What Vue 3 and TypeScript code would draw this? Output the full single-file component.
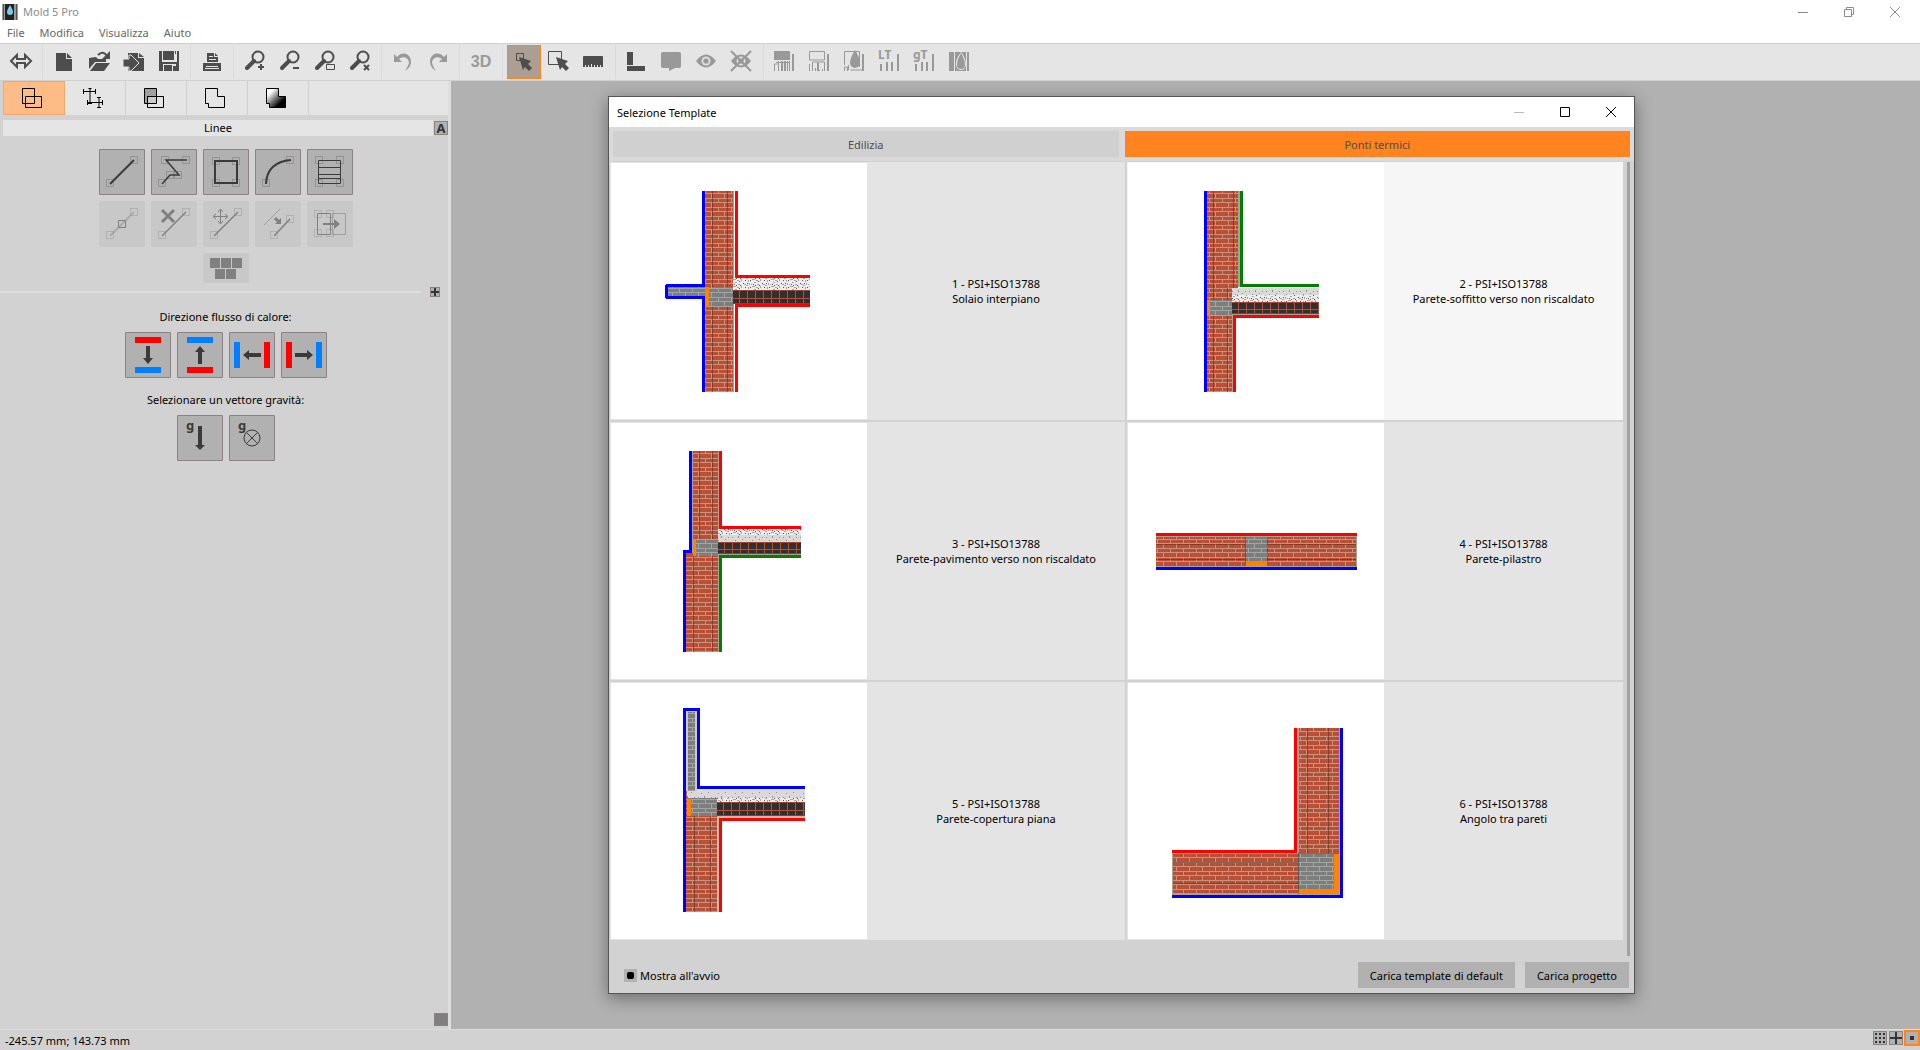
<script setup lang="ts">
import { ref } from 'vue'

interface Tool {
  name: string
  art: string
  off?: boolean
  active?: boolean
}

interface Template {
  id: number
  norm: string
  title: string
  art: string
}

const menus = ['File', 'Modifica', 'Visualizza', 'Aiuto']
const startup = ref(true)
const selectedTab = ref(1)
const dialogTabs = ['Edilizia', 'Ponti termici']

const lens =
  '<circle cx="20" cy="12" r="5.5" fill="none" stroke="currentColor" stroke-width="2"/><path d="M16 16l-7 7" fill="none" stroke="currentColor" stroke-width="4" stroke-linecap="round"/>'
const eye =
  '<path d="M6 16q10-13 20 0q-10 13-20 0z"/><circle cx="16" cy="16" r="4.5" fill="#ddd"/><circle cx="16" cy="16" r="2.6"/>'
const cursor = '<path d="M0 0l12 4-3 3 4 4-3 3-4-4-2 3z"'

const toolGroups: Tool[][] = [
  [{ name: 'Adatta', art: '<path d="M7 16l6-6v4h8v-4l6 6-6 6v-4h-8v4z" fill="none" stroke="currentColor" stroke-width="2"/>' }],
  [
    { name: 'Nuovo', art: '<path d="M9 8h10v6h6v12H9zM20 8l5 5h-5z"/>' },
    { name: 'Apri', art: '<path d="M7 24V13l7-1 2 2h8v3H13zM8 26l6-8h14l-6 8z"/><path d="M16 10q5-5 9 1" fill="none" stroke="currentColor" stroke-width="2"/><path d="M28 6v8h-8z"/>' },
    { name: 'Importa', art: '<path d="M11 8h10v5h6v13H11zM22 8l5 4h-5z"/><path d="M6 14h6v-4h2l8 8-8 8h-2v-4H6z" stroke="#e5e5e5" stroke-width="1"/>' },
    { name: 'Salva', art: '<path d="M7 6h3v11h15V6h2v20H7z"/><path d="M11 6h11v9H11zM23 6h1v3h-1z"/><path d="M11 19h13v7H11z" fill="#e5e5e5"/><path d="M12 20h8v6h-8zM21 21h3v5h-3z"/>' },
  ],
  [{ name: 'Stampa', art: '<path d="M12 8h7v4h4v5H12zM20 8l3 3h-3zM8 18h18v8H8z"/><path d="M14 11h4v1h-4zM14 14h7v1h-7zM11 21h12v1H11zM10 23h14v1H10z" fill="#e5e5e5"/>' }],
  [
    { name: 'Ingrandisci', art: lens + '<path d="M22 19h2v2h2v2h-2v2h-2v-2h-2v-2h2z"/>' },
    { name: 'Riduci', art: lens + '<path d="M20 22h6v2h-6z"/>' },
    { name: 'Zoom area', art: lens + '<path d="M18.500 19.500h8v5h-8z" fill="#e5e5e5" stroke="currentColor"/>' },
    { name: 'Zoom tutto', art: lens + '<path d="M21 20l5 5m0-5l-5 5" stroke="currentColor" stroke-width="2"/>' },
  ],
  [
    { name: 'Annulla', off: true, art: '<path d="M8 9v8h8l-3-3c5-4 10-1 10 4-1 3-2 5-4 8 5-3 6-7 6-10-1-8-9-10-14-4z"/>' },
    { name: 'Ripeti', off: true, art: '<path d="M26 9v8h-8l3-3c-5-4-10-1-10 4 1 3 2 5 4 8-5-3-6-7-6-10 1-8 9-10 14-4z"/>' },
  ],
  [{ name: 'Vista 3D', off: true, art: '<text x="17" y="22" text-anchor="middle" font-family="Liberation Sans, sans-serif" font-weight="700" font-size="16">3D</text>' }],
  [
    { name: 'Seleziona', active: true, art: '<path d="M9.500 8.500h7v7h-7z" fill="none" stroke="currentColor"/>' + cursor + ' transform="translate(12 12)"/>' },
    { name: 'Seleziona area', art: '<path d="M6.500 6.500h13v13h-13z" fill="none" stroke="currentColor"/>' + cursor + ' transform="translate(14 12)"/>' },
    { name: 'Misura', art: '<path d="M6 12q0-1 1-1h18q1 0 1 1v10H6z"/><path d="M8.500 22v-2m3 2v-2m3 2v-3m3 3v-2m3 2v-2m3 2v-2" stroke="#e5e5e5"/>' },
  ],
  [
    { name: 'Angolo', art: '<path d="M7 7h6v13H7zM7 21h18v5H7z"/>' },
    { name: 'Commento', off: true, art: '<path d="M8 7h16q2 0 2 2v12q0 2-2 2h-4l-6 3v-3H8q-2 0-2-2V9q0-2 2-2z"/>' },
    { name: 'Mostra', off: true, art: eye },
    { name: 'Nascondi', off: true, art: eye + '<path d="M6 6l20 20m0-20L6 26" stroke="currentColor" stroke-width="2"/>' },
  ],
  [
    { name: 'Risultati pieni', off: true, art: '<path d="M6 6h16v9H6zM24 9h2v17h-2zM10 16h1v10h-1zM13 16h2v10h-2zM16 16h2v10h-2zM19 16h1v10h-1zM21 16h1v10h-1zM8 17h14v1H8z"/><path d="M6.500 26v-7h3" fill="none" stroke="currentColor"/>' },
    { name: 'Risultati contorno', off: true, art: '<path d="M6.500 15V6.500h15V15h-15M6.500 26v-7m3 7v-9h12v9m-7-9v8m-2 1v-3m4 3v-1m3 1v-2" fill="none" stroke="currentColor"/><path d="M24 9h2v17h-2zM14 18h2v8h-2z"/>' },
    { name: 'Condensa', off: true, art: '<path d="M6.500 20V6.500h15V22m-15 4v-4h3v4m3-1h12m-14-5v5" fill="none" stroke="currentColor"/><path d="M24 9h2v17h-2zM17 5q5 8 5 13a5 5 0 0 1-10 0q0-5 5-13z"/>' },
    { name: 'LT', off: true, art: '<text x="5" y="14" font-family="Noto Sans, sans-serif" font-weight="700" font-size="12">LT</text><path d="M7 19h2v7H7zM13 17h2v9h-2zM18 17h2v9h-2zM24 9h2v17h-2z"/>' },
    { name: 'gT', off: true, art: '<text x="5" y="14" font-family="Noto Sans, sans-serif" font-weight="700" font-size="12">gT</text><path d="M7 19h2v7H7zM13 17h2v9h-2zM18 17h2v9h-2zM24 9h2v17h-2z"/>' },
    { name: 'Umidità', off: true, art: '<path d="M6 7h5v19H6zM24 7h2v19h-2zM12 7h11v19H12z"/><path d="M18 7q-6 8-5 13q1 5 5 5q4 0 5-5q0-7-5-13z" fill="#e5e5e5"/><path d="M18 8q4 7 4 12a4 4 0 0 1-8 0q0-5 4-12z"/>' },
  ],
]

const modes: Tool[] = [
  { name: 'Disegno', active: true, art: '<path d="M.500.500h12v15H.500zM3.500 8.500h16v11h-16z"/>' },
  { name: 'Quote', art: '<path d="M0 3.500h13M.500 1v5m12-5v5M5.500.500h3M7 0v16m-2-.500h4M4 14.500h16M4.500 12v5m15-5v5M16 9v11m-2-.500h4m-4-10h4"/>' },
  { name: 'Materiali', art: '<path d="M.500.500h12v15H.500z" fill="#a0a0a0"/><path d="M3.500 8.500h16v11h-16z" fill="#e5e5e5"/><path d="M3.500 8.500h9v7h-9z" fill="#ccc"/>' },
  { name: 'Contorni', art: '<path d="M.500.500h12v8h7v11h-16v-4h-3z"/>' },
  { name: 'Risultati', art: '<defs><linearGradient id="shade" x1="0" y1="0" x2="1" y2="1"><stop offset=".2" stop-color="#fff"/><stop offset=".75" stop-color="#000"/></linearGradient></defs><path d="M.500.500h12v8h7v11h-16v-4h-3z" fill="url(#shade)"/>' },
]

const box = (x: number, y: number) =>
  `<rect x="${x + 0.5}" y="${y + 0.5}" width="7" height="7" fill="none" stroke="#888" stroke-width="1"/>`

const lineTools: Tool[][] = [
  [
    { name: 'Linea', art: box(7, 30) + box(31, 7) + '<path d="M11 35l24-24" stroke-width="2"/>' },
    { name: 'Polilinea', art: box(7, 30) + box(15, 22) + box(23, 22) + box(10, 7) + box(31, 7) + '<path d="M11 35l8-9h9L15 11h21" stroke-width="1.500"/>' },
    { name: 'Rettangolo', art: box(9, 8) + box(29, 8) + box(9, 30) + box(29, 30) + '<path d="M12 12h22v22H12z" stroke-width="2"/>' },
    { name: 'Arco', art: box(7, 30) + box(31, 7) + '<path d="M11 35Q12 13 36 11" stroke-width="2"/>' },
    { name: 'Stratigrafia', art: box(8, 7) + box(29, 7) + box(8, 30) + box(29, 30) + '<path d="M11.500 11.500h22v23h-22zM11 18.500h23M11 25.500h23M11 29.500h23"/>' },
  ],
  [
    { name: 'Aggiungi punto', off: true, art: box(7, 30) + box(31, 7) + '<path d="M11 35l24-24" stroke-width="2" opacity=".4"/><path d="M19.500 19.500h7v7h-7z"/>' },
    { name: 'Elimina', off: true, art: box(7, 30) + box(31, 7) + '<path d="M11 35l24-24" stroke-width="1.500"/><path d="M11 9l12 12m0-12L11 21" stroke-width="3"/>' },
    { name: 'Sposta', off: true, art: box(7, 30) + box(31, 7) + '<path d="M11 35l24-24" stroke-width="1.500"/><path d="M17.500 9v13M11 15.500h13M15 11l2.500-3 2.500 3M15 20l2.500 3 2.500-3M13 13l-3 2.500 3 2.500M22 13l3 2.500-3 2.500"/>' },
    { name: 'Parallela', off: true, art: box(15, 30) + box(31, 14) + '<path d="M9 24L25 8" opacity=".6"/><path d="M19 35l16-17" stroke-width="1.500"/><path d="M20 17l4 4" stroke-width="3"/><path d="M20 23h6v-6z" fill="currentColor" stroke="none"/>' },
    { name: 'Sposta lato', off: true, art: box(7, 9) + box(19, 9) + box(7, 28) + box(19, 28) + '<path d="M10.500 12.500h13v21h-13z"/><path d="M25.500 12.500h13v21h-13z" opacity=".6"/><path d="M16 23h12" stroke-width="2"/><path d="M27 18l6 5-6 5z" fill="currentColor" stroke="none"/>' },
  ],
]

const red = '#f00'
const azure = '#0080ff'
const flowTools: Tool[] = [
  { name: 'Flusso verso il basso', art: `<path d="M10 5h26v6H10z" fill="${red}"/><path d="M10 35h26v6H10z" fill="${azure}"/><path d="M21 14h4v12h3l-5 6-5-6h3z"/>` },
  { name: "Flusso verso l'alto", art: `<path d="M10 5h26v6H10z" fill="${azure}"/><path d="M10 35h26v6H10z" fill="${red}"/><path d="M21 32h4V20h3l-5-6-5 6h3z"/>` },
  { name: 'Flusso verso sinistra', art: `<path d="M5 10h6v26H5z" fill="${azure}"/><path d="M35 10h6v26h-6z" fill="${red}"/><path d="M32 21v4H20v3l-6-5 6-5v3z"/>` },
  { name: 'Flusso verso destra', art: `<path d="M5 10h6v26H5z" fill="${red}"/><path d="M35 10h6v26h-6z" fill="${azure}"/><path d="M14 21v4h12v3l6-5-6-5v3z"/>` },
]
const gText = '<text x="9" y="15" font-family="Noto Sans, sans-serif" font-weight="700" font-size="13">g</text>'
const gravityTools: Tool[] = [
  { name: 'Gravità verticale', art: gText + '<path d="M21 11h4v19h3l-5 5-5-5h3z"/>' },
  { name: 'Gravità perpendicolare', art: gText + '<circle cx="23" cy="23" r="8" fill="none" stroke="currentColor"/><path d="M17.500 17.500l11 11m0-11l-11 11" stroke="currentColor"/>' },
]

const r = (x1: number, y1: number, x2: number, y2: number, fill: string, opacity = 1) =>
  `<rect x="${x1}" y="${y1}" width="${x2 - x1}" height="${y2 - y1}" fill="${fill}" opacity="${opacity}"/>`
const seamV = (x: number, y1: number, y2: number) => r(x, y1, x + 1, y2, '#3a1a10', 0.4)
const seamH = (y: number, x1: number, x2: number) => r(x1, y, x2, y + 1, '#3a1a10', 0.4)
const edge = (d: string, color: string) => `<path d="${d}" fill="none" stroke="${color}" stroke-width="3"/>`
const cells = (x1: number, y1: number, x2: number, y2: number) => {
  let out = r(x1, y1, x2, y2, '#303030')
  for (let x = x1 + 6; x < x2; x += 8) out += r(x, y1, x + 1, y2, '#c04a32')
  const mid = Math.round((y1 + y2) / 2) + 1
  return out + r(x1, mid, x2, mid + 1, '#c04a32') + r(x1, y1, x2, y1 + 1, '#a04434') + r(x1, y2 - 1, x2, y2, '#7a4438')
}
const brick = 'url(#brick)'
const block = 'url(#block)'
const screed = 'url(#screed)'
const light = 'url(#light)'
const orange = '#ff8200'
const plaster = '#a9a294'

const templates: Template[] = [
  {
    id: 1, norm: 'PSI+ISO13788', title: 'Solaio interpiano',
    art: r(94, 28, 122, 229, brick) + seamV(101, 28, 229) + seamV(116, 28, 229) + r(122, 28, 123, 229, plaster) +
      r(57, 124, 94, 133, block) + r(94, 124, 122, 144, block) + r(94, 124, 98, 144, orange) +
      r(122, 115, 199, 127, screed) + cells(122, 127, 199, 141) +
      edge('M92.500 28V122.500H57q-1.500 0-1.500 1.500v9q0 1.500 1.500 1.500H92.500V229', '#00f') +
      edge('M125.500 28V113.500H199M199 142.500H125.500V229', red),
  },
  {
    id: 2, norm: 'PSI+ISO13788', title: 'Parete-soffitto verso non riscaldato',
    art: r(79, 28, 110, 125, brick) + r(79, 125, 104, 229, brick) + r(110, 28, 112, 124, plaster) + r(104, 152, 105, 229, plaster) +
      seamV(85, 28, 229) + seamV(105, 28, 125) + seamV(99, 125, 229) +
      r(79, 137, 104, 153, block) + r(79, 137, 82, 153, orange) +
      r(104, 125, 191, 132, light) + r(104, 132, 191, 139, screed) + cells(104, 139, 191, 151) + r(104, 151, 191, 152, plaster) +
      edge('M77.500 28V229', '#00f') + edge('M113.500 28V122.500H191', '#008000') + edge('M191 153.500H106.500V229', red),
  },
  {
    id: 3, norm: 'PSI+ISO13788', title: 'Parete-pavimento verso non riscaldato',
    art: r(81, 28, 82, 130, plaster) + r(82, 28, 107, 130, brick) + r(75, 130, 107, 229, brick) + r(107, 28, 108, 229, plaster) +
      seamV(88, 28, 116) + seamV(101, 28, 229) + seamV(82, 133, 229) +
      r(82, 116, 107, 133, block) + r(82, 116, 85, 133, orange) +
      r(107, 106, 190, 112, screed) + r(107, 112, 190, 119, light) + cells(107, 119, 190, 131) + r(107, 131, 190, 132, plaster) +
      edge('M79.500 28V128.500H73.500V229', '#00f') + edge('M109.500 28V104.500H190', red) + edge('M190 133.500H109.500V229', '#008000'),
  },
  {
    id: 4, norm: 'PSI+ISO13788', title: 'Parete-pilastro',
    art: r(28, 113, 229, 144, plaster) + r(28, 114, 228, 143, brick) + seamH(121, 28, 228) + seamH(136, 28, 228) +
      r(117, 114, 139, 138, block) + r(117, 138, 139, 143, orange) + seamV(117, 114, 143) + seamV(139, 114, 143) +
      edge('M28 111.500H229', red) + edge('M28 145.500H229', '#00f'),
  },
  {
    id: 5, norm: 'PSI+ISO13788', title: 'Parete-copertura piana',
    art: r(75, 28, 86, 108, '#d8c8b4') + r(77, 29, 84, 108, block) + r(75, 108, 106, 229, brick) + r(106, 133, 108, 229, '#c8bca8') +
      seamV(83, 133, 229) + seamV(99, 133, 229) +
      r(86, 106, 194, 108, '#ddd') + r(76, 108, 194, 115, light) + r(106, 115, 194, 119, screed) +
      r(76, 115, 106, 133, block) + r(76, 116, 80, 133, orange) + cells(106, 119, 194, 133) + r(106, 133, 194, 135, '#c8bca8') +
      edge('M73.500 229V26.500H87.500V104.500H194', '#00f') + edge('M194 136.500H109.500V229', red),
  },
  {
    id: 6, norm: 'PSI+ISO13788', title: 'Angolo tra pareti',
    art: r(169, 45, 212, 212, plaster) + r(44, 170, 212, 212, plaster) + r(171, 45, 211, 170, brick) + r(45, 171, 170, 211, brick) +
      seamV(179, 45, 170) + seamV(200, 45, 170) + seamH(179, 45, 170) + seamH(200, 45, 170) +
      r(170, 170, 211, 211, orange) + r(170, 170, 206, 206, block) + seamV(170, 170, 211) + seamH(170, 170, 211) +
      edge('M167.500 45V168.500H44', red) + edge('M213.500 45V213.500H44', '#00f'),
  },
]
</script>

<template>
  <div class="app">
    <svg class="defs" aria-hidden="true" width="0" height="0">
      <defs>
        <pattern id="brick" width="13" height="9" patternUnits="userSpaceOnUse">
          <path fill="#b95138" d="M0 0h13v9H0z" />
          <path fill="#ac4a33" d="M0 1h6v1H0zM7 6h5v1H7z" />
          <path fill="#cb917b" d="M0 3h13v1H0zM0 8h13v1H0zM3 0h1v3H3zM9 4h1v4H9z" />
        </pattern>
        <pattern id="block" width="13" height="9" patternUnits="userSpaceOnUse">
          <path fill="#7c7e7e" d="M0 0h13v9H0z" />
          <path fill="#a3a5a5" d="M0 3h13v1H0zM0 8h13v1H0zM3 0h1v3H3zM9 4h1v4H9z" />
        </pattern>
        <pattern id="screed" width="19" height="7" patternUnits="userSpaceOnUse">
          <path fill="#ececec" d="M0 0h19v7H0z" />
          <path fill="#a4a4a4" d="M0 2h2v1H0zM2 3h2v1H2zM5 1h1v2H5zM8 4h3v1H8zM13 2h2v1h-2zM16 4h1v2h-1zM10 0h2v1h-2zM4 5h1v2H4zM12 5h2v1h-2zM7 2h1v1H7z" />
          <path fill="#555" d="M3 1h1v1H3zM6 5h1v1H6zM11 3h1v1h-1zM15 3h1v1h-1zM18 1h1v1h-1zM9 2h1v1H9zM14 6h1v1h-1zM1 5h1v1H1z" />
        </pattern>
        <pattern id="light" width="17" height="7" patternUnits="userSpaceOnUse">
          <path fill="#d9d9d7" d="M0 0h17v7H0z" />
          <path fill="#8f8f8f" d="M2 2h1v1H2zM5 5h1v1H5zM8 1h1v2H8zM12 4h1v1h-1zM15 2h1v1h-1z" />
        </pattern>
      </defs>
    </svg>

    <header class="titlebar">
      <svg class="logo" width="16" height="16" viewBox="0 0 16 16">
        <path fill="#999" d="M0 0h16v16H0z" />
        <path fill="#555" d="M1 0h1v16H1zM14 0h1v16h-1z" />
        <path fill="#222" d="M3 0h9v16H3z" />
        <path fill="#7cc9f2" d="M8 1q3 5 3 7a3 3 0 0 1-6 0q0-2 3-7z" />
      </svg>
      <span class="app-name">Mold 5 Pro</span>
      <div class="window-buttons">
        <button aria-label="Riduci a icona"><svg width="10" height="10"><path d="M0 5.500h10" /></svg></button>
        <button aria-label="Ripristina"><svg width="10" height="10"><path d="M.500 2.500h7v7h-7zM2.500 2.500v-2h7v7h-2" /></svg></button>
        <button aria-label="Chiudi"><svg width="10" height="10"><path d="M0 0l10 10M10 0L0 10" /></svg></button>
      </div>
    </header>

    <nav class="menubar">
      <button v-for="m in menus" :key="m">{{ m }}</button>
    </nav>

    <div class="toolbar">
      <div v-for="(group, gi) in toolGroups" :key="gi" class="tool-group">
        <button v-for="t in group" :key="t.name" :class="{ off: t.off, active: t.active }" :aria-label="t.name">
          <svg width="34" height="34" viewBox="0 0 34 34" v-html="t.art" />
        </button>
      </div>
    </div>

    <div class="work">
      <aside class="panel">
        <div class="modes">
          <button v-for="m in modes" :key="m.name" :class="{ active: m.active }" :aria-label="m.name">
            <svg width="20" height="20" viewBox="0 0 20 20" v-html="m.art" />
          </button>
        </div>
        <div class="section-head">
          <h2>Linee</h2>
          <button class="mini auto">A</button>
        </div>
        <div class="line-tools">
          <div v-for="(row, ri) in lineTools" :key="ri" class="tiles">
            <button v-for="t in row" :key="t.name" class="tile stroked" :class="{ off: t.off }" :aria-label="t.name">
              <svg width="46" height="46" viewBox="0 0 46 46" v-html="t.art" />
            </button>
          </div>
          <div class="tiles">
            <button class="tile low off" aria-label="Blocchi">
              <svg width="46" height="30" viewBox="0 0 46 30">
                <path d="M7 5h10v10H7zM18 5h10v10H18zM29 5h10v10H29zM12 16h10v10H12zM23 16h10v10H23z" />
              </svg>
            </button>
          </div>
        </div>
        <div class="divider">
          <span class="rule"></span>
          <button class="mini plus" aria-label="Espandi">
            <svg width="8" height="8"><path d="M3 0h2v3h3v2H5v3H3V5H0V3h3z" /></svg>
          </button>
        </div>
        <p class="caption">Direzione flusso di calore:</p>
        <div class="tiles">
          <button v-for="t in flowTools" :key="t.name" class="tile" :aria-label="t.name">
            <svg width="46" height="46" viewBox="0 0 46 46" v-html="t.art" />
          </button>
        </div>
        <p class="caption second">Selezionare un vettore gravità:</p>
        <div class="tiles">
          <button v-for="t in gravityTools" :key="t.name" class="tile" :aria-label="t.name">
            <svg width="46" height="46" viewBox="0 0 46 46" v-html="t.art" />
          </button>
        </div>
        <div class="panel-foot"><button class="mini grip" aria-label="Pannello"></button></div>
      </aside>

      <main class="canvas"></main>
    </div>

    <footer class="status">
      <span>-245.57 mm; 143.73 mm</span>
      <div class="snaps">
        <button aria-label="Griglia">
          <svg width="12" height="12"><path d="M1 2h11M1 6h11M1 10h11" stroke-dasharray="2 2" stroke-width="2" /></svg>
        </button>
        <button aria-label="Assi"><svg width="12" height="12"><path d="M6 0v12M0 6h12" stroke-width="2" /></svg></button>
        <button class="active" aria-label="Punti"><svg width="12" height="12"><path d="M4 6h4" stroke-width="4" /></svg></button>
      </div>
    </footer>

    <section class="dialog" role="dialog" aria-labelledby="dialog-title">
      <header class="dialog-title">
        <h1 id="dialog-title">Selezione Template</h1>
        <div class="window-buttons">
          <button class="faint" aria-label="Riduci a icona"><svg width="10" height="10"><path d="M0 5.500h10" /></svg></button>
          <button aria-label="Ingrandisci"><svg width="10" height="10"><path d="M.500.500h9v9h-9z" /></svg></button>
          <button aria-label="Chiudi"><svg width="10" height="10"><path d="M0 0l10 10M10 0L0 10" /></svg></button>
        </div>
      </header>
      <div class="dialog-tabs" role="tablist">
        <button v-for="(t, i) in dialogTabs" :key="t" role="tab" :aria-selected="i === selectedTab" :class="{ active: i === selectedTab }" @click="selectedTab = i">
          {{ t }}
        </button>
      </div>
      <div class="list">
        <div class="grid">
          <button v-for="t in templates" :key="t.id" class="card" :class="{ hovered: t.id === 2 }">
            <svg class="preview" width="256" height="256" viewBox="0 0 256 256" shape-rendering="crispEdges" v-html="t.art" />
            <span class="label">{{ t.id }} - {{ t.norm }}<br />{{ t.title }}</span>
          </button>
        </div>
        <div class="scrollbar"></div>
      </div>
      <footer class="dialog-foot">
        <label><input v-model="startup" type="checkbox" />Mostra all'avvio</label>
        <div class="actions">
          <button>Carica template di default</button>
          <button>Carica progetto</button>
        </div>
      </footer>
    </section>
  </div>
</template>

<style>
body {
  margin: 0;
}
</style>

<style scoped>
.app {
  position: relative;
  display: flex;
  flex-direction: column;
  min-height: 100vh;
  background: #fff;
  color: #000;
  font: 11px/15px "Noto Sans", "Open Sans", sans-serif;
}
.defs {
  position: absolute;
}
button {
  display: block;
  margin: 0;
  padding: 0;
  border: 0;
  background: none;
  color: inherit;
  font: inherit;
}
svg {
  display: block;
  fill: currentColor;
}
h1,
h2,
p {
  margin: 0;
  font: inherit;
}

.titlebar {
  display: flex;
  align-items: center;
  height: 23px;
  padding-left: 2px;
}
.app-name {
  margin-left: 5px;
  color: #8c8c8c;
}
.window-buttons {
  display: flex;
  margin-left: auto;
}
.window-buttons button {
  display: grid;
  place-items: center;
  width: 46px;
  height: 20px;
}
.window-buttons svg {
  fill: none;
  stroke: currentColor;
}
.titlebar .window-buttons {
  color: #8c8c8c;
  padding-right: 2px;
}
.menubar {
  display: flex;
  gap: 15px;
  height: 18px;
  padding: 1px 7px 0;
  box-sizing: border-box;
  color: #666;
}
.toolbar {
  display: flex;
  height: 34px;
  padding: 1px 4px;
  margin-top: 2px;
  border-top: 1px solid #cfcfcf;
  border-bottom: 1px solid #d0d0d0;
  background: #e5e5e5;
  color: #4d4d4d;
}
.tool-group {
  display: flex;
  gap: 1px;
}
.tool-group + .tool-group {
  margin-left: 4px;
  padding-left: 4px;
  border-left: 1px solid #dadada;
}
.tool-group .off {
  color: #999;
}
.tool-group .active {
  background: #ab9e93;
  outline: 1px solid #ff831e;
  outline-offset: -1px;
}

.work {
  display: flex;
  flex: 1;
  background: #b1b1b1;
}
.panel {
  display: flex;
  flex-direction: column;
  width: 451px;
  box-sizing: border-box;
  border-right: 3px solid #dedede;
  background: #d2d2d2;
}
.modes {
  display: flex;
  height: 34px;
  margin: 0 0 5px 3px;
  background: #e5e5e5;
}
.modes button {
  display: grid;
  place-items: center;
  width: 61px;
  box-sizing: border-box;
  padding-right: 5px;
  border-right: 1px solid #cfcfcf;
}
.modes .active {
  width: 62px;
  background: #fdbb86;
  border: 1px solid #f5a868;
}
.modes svg {
  fill: none;
  stroke: #000;
}
.section-head {
  display: flex;
  height: 16px;
  margin-left: 3px;
}
.section-head h2 {
  flex: 1;
  background: #e5e5e5;
  text-align: center;
}
.mini {
  box-sizing: border-box;
  border: 1px solid #8c8284;
  background: #b1b1b1;
  color: #333;
}
.auto {
  width: 14px;
  height: 14px;
  margin: 1px 0 1px 1px;
  font: 700 13px/12px "Noto Sans", sans-serif;
}
.line-tools {
  display: flex;
  flex-direction: column;
  gap: 6px;
  padding-top: 13px;
}
.tiles {
  display: flex;
  justify-content: center;
  gap: 6px;
  padding-left: 4px;
}
.tile {
  background: #b1b1b1;
  color: #3a3a3a;
  border-radius: 1px;
  outline: 1px solid #8c8284;
  outline-offset: -1px;
}
.stroked svg {
  fill: none;
  stroke: currentColor;
}
.stroked :deep(rect) {
  opacity: 0.7;
}
.tile.off {
  background: #c8c8c8;
  color: #808080;
  outline: none;
}
.tile.off :deep(rect) {
  opacity: 0.35;
}
.divider {
  display: flex;
  align-items: center;
  justify-content: space-between;
  margin-top: 4px;
  padding-right: 8px;
}
.rule {
  width: 421px;
  height: 2px;
  background: #dedede;
}
.plus {
  display: grid;
  place-items: center;
  width: 10px;
  height: 10px;
}
.caption {
  padding: 12px 0 8px 3px;
  text-align: center;
}
.caption.second {
  padding-top: 14px;
}
.panel-foot {
  display: flex;
  justify-content: flex-end;
  margin-top: auto;
  padding-bottom: 3px;
}
.grip {
  width: 14px;
  height: 13px;
  background: #808080;
}
.canvas {
  flex: 1;
}

.status {
  display: flex;
  align-items: center;
  justify-content: space-between;
  height: 20px;
  padding: 0 1px 0 5px;
  border-top: 1px solid #dcdcdc;
  background: #d2d2d2;
}
.snaps {
  display: flex;
  gap: 2px;
  padding-bottom: 4px;
  align-items: center;
}
.snaps button {
  padding: 1px;
  background: #b1b1b1;
  outline: 1px solid #8c8284;
  outline-offset: -1px;
  color: #333;
}
.snaps .active {
  outline: 2px solid #ff831e;
}
.snaps svg {
  stroke: currentColor;
}

.dialog {
  position: absolute;
  top: 96px;
  left: 608px;
  width: 1027px;
  box-sizing: border-box;
  border: 1px solid #555;
  background: #d2d2d2;
  box-shadow: 0 4px 16px rgba(0, 0, 0, 0.4);
}
.dialog-title {
  display: flex;
  align-items: center;
  height: 30px;
  padding-left: 8px;
  background: #fff;
}
.dialog-title .faint {
  color: #bbb;
}
.dialog-tabs {
  display: flex;
  gap: 6px;
  padding: 4px;
  background: #dadada;
}
.dialog-tabs button {
  flex: 1;
  height: 26px;
  background: #d0d0d0;
  color: #4d4d4d;
}
.dialog-tabs .active {
  background: #ff831e;
}
.list {
  display: flex;
  justify-content: space-between;
  height: 794px;
  padding: 1px 4px 0 1px;
}
.grid {
  display: grid;
  grid-template-columns: 515px 496px;
  grid-auto-rows: 258px;
  gap: 2px;
}
.card {
  display: flex;
  align-items: center;
  padding-left: 1px;
  background: #e4e4e4;
}
.hovered {
  background: #f6f6f6;
}
.preview {
  flex: none;
  background: #fff;
}
.label {
  flex: 1;
  text-align: center;
}
.scrollbar {
  width: 3px;
  background: #a2a2a2;
}
.dialog-foot {
  display: flex;
  align-items: center;
  justify-content: space-between;
  height: 26px;
  padding: 6px 5px 5px 15px;
}
.dialog-foot label {
  display: flex;
  align-items: center;
  gap: 3px;
}
.dialog-foot input {
  appearance: none;
  display: grid;
  place-items: center;
  width: 13px;
  height: 13px;
  margin: 0;
  background: #b1b1b1;
}
.dialog-foot input:checked::before {
  content: "";
  width: 7px;
  height: 7px;
  border-radius: 2px;
  background: #000;
}
.actions {
  display: flex;
  gap: 10px;
}
.actions button {
  height: 26px;
  padding: 0 12px;
  background: #b1b1b1;
}
</style>
